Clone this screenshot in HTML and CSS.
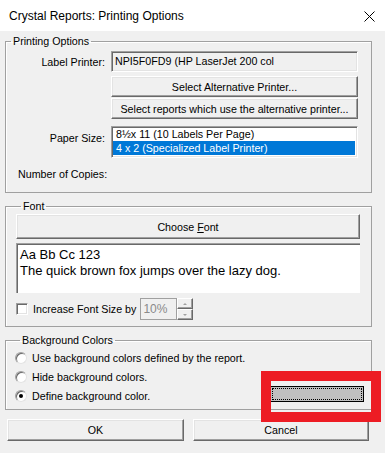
FILE: index.html
```html
<!DOCTYPE html>
<html lang="en">
<head>
    <meta charset="UTF-8">
    <title>Crystal Reports: Printing Options</title>
    <link rel="stylesheet" href="styles.css">
</head>
<body>
    <div class="window">
        <div class="titlebar">
            <span class="title">Crystal Reports: Printing Options</span>
            <svg class="close" width="11" height="11" viewBox="0 0 11 11">
                <path d="M0.5 0.5 L10.5 10.5 M10.5 0.5 L0.5 10.5" stroke="#000" stroke-width="1" fill="none"/>
            </svg>
        </div>

        <div class="dialog">
            <fieldset class="group group-printing">
                <legend>Printing Options</legend>
                <div class="form-grid">
                    <span class="field-label label-printer">Label Printer:</span>
                    <div class="textbox readonly">NPI5F0FD9 (HP LaserJet 200 col</div>

                    <span></span>
                    <button class="btn btn-alt">Select Alternative Printer...</button>

                    <span></span>
                    <button class="btn btn-reports">Select reports which use the alternative printer...</button>

                    <span class="field-label label-paper">Paper Size:</span>
                    <div class="listbox">
                        <div class="list-item">8½x 11 (10 Labels Per Page)</div>
                        <div class="list-item selected">4 x 2 (Specialized Label Printer)</div>
                    </div>
                </div>
                <div class="copies">Number of Copies:</div>
            </fieldset>

            <fieldset class="group group-font">
                <legend>Font</legend>
                <button class="btn btn-font">Choose <u>F</u>ont</button>
                <div class="sample">
                    <div>Aa Bb Cc 123</div>
                    <div>The quick brown fox jumps over the lazy dog.</div>
                </div>
                <div class="increase-row">
                    <span class="checkbox"></span>
                    <span class="increase-label">Increase Font Size by</span>
                    <div class="spin">
                        <div class="spin-input">10%</div>
                        <div class="spin-buttons">
                            <span class="spin-btn"><span class="arrow-up"></span></span>
                            <span class="spin-btn"><span class="arrow-down"></span></span>
                        </div>
                    </div>
                </div>
            </fieldset>

            <fieldset class="group group-bg">
                <legend>Background Colors</legend>
                <div class="radio-row">
                    <span class="radio"></span>
                    <span>Use background colors defined by the report.</span>
                </div>
                <div class="radio-row">
                    <span class="radio"></span>
                    <span>Hide background colors.</span>
                </div>
                <div class="radio-row">
                    <span class="radio checked"></span>
                    <span>Define background color.</span>
                    <button class="color-btn"></button>
                </div>
            </fieldset>

            <div class="actions">
                <button class="btn btn-action">OK</button>
                <button class="btn btn-action">Cancel</button>
            </div>
        </div>

        <div class="highlight"></div>
    </div>
</body>
</html>
```

FILE: styles.css
```css
body {
    margin: 0;
    background-color: #f0f0f0;
    font-family: "Liberation Sans", Arial, sans-serif;
    font-size: 10.7px;
    color: #000;
}
.window {
    position: relative;
    width: 385px;
    height: 453px;
    background-color: #f0f0f0;
}
.titlebar {
    display: flex;
    align-items: center;
    justify-content: space-between;
    height: 31px;
    padding: 0 10px 0 9px;
    background-color: #fff;
}
.title {
    font-size: 12px;
    font-family: "Liberation Sans", Arial, sans-serif;
}
.close {
    margin-top: 1px;
}
.dialog {
    display: flex;
    flex-direction: column;
    padding-top: 3px;
}

/* group boxes */
.group {
    margin: 0 13px 0 5px;
    padding: 0;
    border: 1px solid #a0a0a0;
    box-shadow: inset 1px 1px #fff;
    min-width: 0;
}
.group legend {
    margin-left: 5px;
    padding: 0 2px;
    line-height: 14px;
}
.group-printing {
    padding-bottom: 11px;
}
.group-font {
    margin-top: 6px;
    padding: 1px 11px 6px 10px;
    display: flex;
    flex-direction: column;
}
.group-bg {
    margin-top: 6px;
    padding: 1px 3px 4px 9px;
}

/* buttons and inputs */
.btn {
    font: inherit;
    color: #000;
    background-color: #f0f0f0;
    border: 1px solid;
    border-color: #fff #696969 #696969 #fff;
    box-shadow: inset -1px -1px #a0a0a0, inset 1px 1px #e3e3e3;
    padding: 0;
    height: 21px;
}
.btn u {
    text-decoration-thickness: 1px;
}
.textbox {
    height: 21px;
    box-sizing: border-box;
    border: 1px solid;
    border-color: #a0a0a0 #fff #fff #a0a0a0;
    box-shadow: inset 1px 1px #696969, inset -1px -1px #e3e3e3;
    padding: 3px 3px 0;
    white-space: nowrap;
    overflow: hidden;
}
.readonly {
    background-color: #f0f0f0;
}

.form-grid {
    display: grid;
    grid-template-columns: 99px 247px;
    column-gap: 6px;
}
.field-label {
    text-align: right;
}
.label-printer {
    align-self: center;
    margin-top: 3px;
}
.form-grid .textbox {
    margin-top: 3px;
}
.btn-alt {
    margin-top: 4px;
}
.btn-reports {
    margin-top: 1px;
}
.label-paper {
    margin-top: 13px;
    align-self: start;
}
.listbox {
    margin-top: 7px;
    height: 32px;
    box-sizing: border-box;
    background-color: #fff;
    border: 1px solid;
    border-color: #a0a0a0 #fff #fff #a0a0a0;
    box-shadow: inset 1px 1px #696969, inset -1px -1px #e3e3e3;
    padding: 1px 2px 0 1px;
}
.list-item {
    height: 14px;
    line-height: 14px;
    padding-left: 3px;
    white-space: nowrap;
}
.list-item:first-child {
    height: 13px;
    line-height: 13px;
}
.list-item.selected {
    background-color: #0078d7;
    color: #fff;
}
.copies {
    margin-top: 9px;
    margin-left: 12px;
    line-height: 14px;
}

/* font group */
.btn-font {
    height: 25px;
}
.sample {
    margin-top: 4px;
    height: 50px;
    box-sizing: border-box;
    background-color: #fff;
    border-top: 1px solid #a0a0a0;
    border-left: 1px solid #a0a0a0;
    box-shadow: inset 1px 1px #696969;
    padding: 3px 0 0 3px;
    font-size: 13px;
    line-height: 16px;
}
.increase-row {
    display: flex;
    align-items: center;
    margin-top: 5px;
    height: 22px;
}
.checkbox {
    width: 12px;
    height: 12px;
    box-sizing: border-box;
    background-color: #fff;
    border: 1px solid;
    border-color: #a0a0a0 #fff #fff #a0a0a0;
    box-shadow: inset 1px 1px #696969, inset -1px -1px #e3e3e3;
}
.increase-label {
    margin-left: 5px;
}
.spin {
    display: flex;
    margin-left: 4px;
    height: 22px;
}
.spin-input {
    width: 37px;
    box-sizing: border-box;
    border: 1px solid #a0a0a0;
    color: #8a8a8a;
    padding: 3px 0 0 2px;
    font-size: 12px;
}
.spin-buttons {
    display: flex;
    flex-direction: column;
    width: 16px;
}
.spin-btn {
    flex: 1;
    display: flex;
    align-items: center;
    justify-content: center;
    border: 1px solid;
    border-color: #fff #696969 #696969 #fff;
    box-shadow: inset -1px -1px #a0a0a0;
}
.arrow-up {
    border-left: 2px solid transparent;
    border-right: 2px solid transparent;
    border-bottom: 2px solid #a0a0a0;
}
.arrow-down {
    border-left: 2px solid transparent;
    border-right: 2px solid transparent;
    border-top: 2px solid #a0a0a0;
}

/* background colors group */
.radio-row {
    display: flex;
    align-items: center;
    height: 19px;
    gap: 5px;
}
.radio {
    position: relative;
    width: 12px;
    height: 12px;
    box-sizing: border-box;
    border-radius: 50%;
    background-color: #fff;
    border: 1px solid;
    border-color: #a0a0a0 #e3e3e3 #e3e3e3 #a0a0a0;
    box-shadow: inset 1px 1px #696969;
}
.radio.checked::after {
    content: "";
    position: absolute;
    left: 3px;
    top: 3px;
    width: 4px;
    height: 4px;
    border-radius: 50%;
    background-color: #000;
}
.color-btn {
    margin-left: auto;
    margin-right: 4px;
    align-self: flex-start;
    width: 94px;
    height: 16px;
    padding: 0;
    border: 1px solid #000;
    background-color: #c0c0c0;
    outline: 1px dotted #000;
    outline-offset: -3px;
}

.actions {
    display: flex;
    gap: 9px;
    margin-top: 9px;
    padding-left: 7px;
}
.btn-action {
    width: 177px;
    height: 22px;
}
.btn-action + .btn-action {
    width: 176px;
}

/* red annotation box drawn over the dialog */
.highlight {
    position: absolute;
    left: 261px;
    top: 371px;
    width: 100px;
    height: 31px;
    border: 10px solid #ed1c24;
}
```
